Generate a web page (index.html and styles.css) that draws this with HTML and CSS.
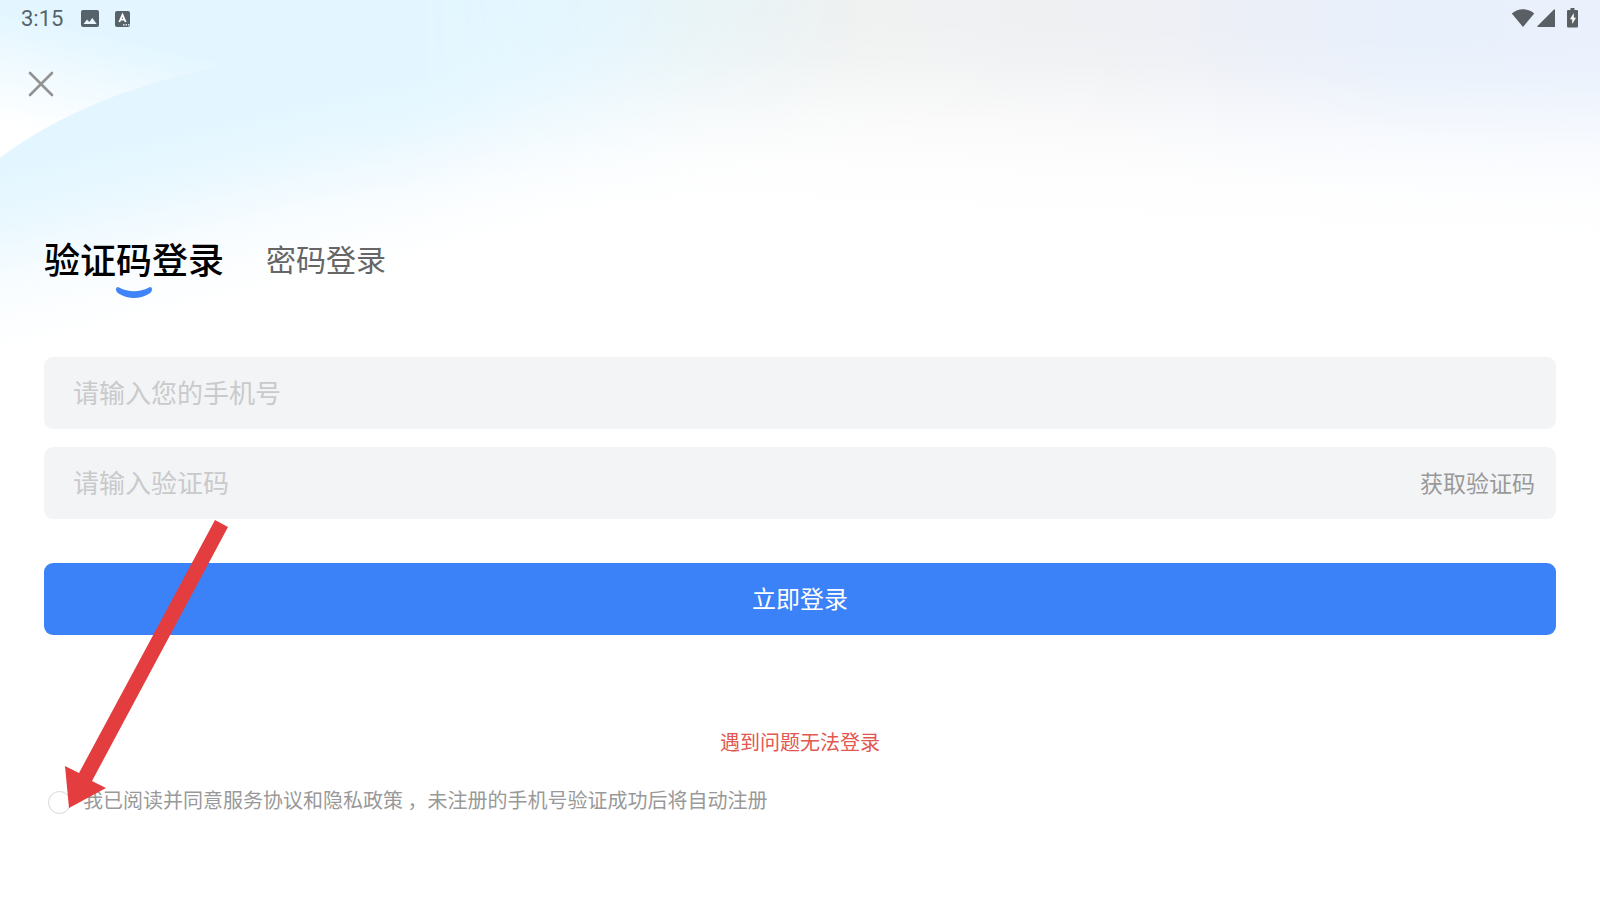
FILE: index.html
```html
<!DOCTYPE html>
<html lang="zh-CN">
<head>
<meta charset="utf-8">
<meta name="viewport" content="width=device-width, initial-scale=1">
<title>登录</title>
<link rel="stylesheet" href="styles.css">
</head>
<body>
<div class="page">
  <svg class="backdrop" viewBox="0 0 1600 360" preserveAspectRatio="none" aria-hidden="true">
    <defs>
      <linearGradient id="hue" x1="0" y1="0" x2="1" y2="0">
        <stop offset="0" stop-color="#e3f6ff"/>
        <stop offset=".3" stop-color="#e4f6fe"/>
        <stop offset=".37" stop-color="#e8f5fa"/>
        <stop offset=".43" stop-color="#ecf3f3"/>
        <stop offset=".55" stop-color="#f0f1f1"/>
        <stop offset=".7" stop-color="#eff0f3"/>
        <stop offset=".8" stop-color="#ebeff8"/>
        <stop offset=".88" stop-color="#e8f0fb"/>
        <stop offset="1" stop-color="#eaf1fd"/>
      </linearGradient>
      <linearGradient id="fade" gradientUnits="userSpaceOnUse" x1="1000" y1="20" x2="992" y2="225">
        <stop offset="0" stop-color="#fff" stop-opacity="0"/>
        <stop offset=".2" stop-color="#fff" stop-opacity=".15"/>
        <stop offset=".5" stop-color="#fff" stop-opacity=".65"/>
        <stop offset=".75" stop-color="#fff" stop-opacity=".92"/>
        <stop offset="1" stop-color="#fff"/>
      </linearGradient>
      <linearGradient id="sky" gradientUnits="userSpaceOnUse" x1="0" y1="170" x2="40" y2="346">
        <stop offset="0" stop-color="#e3f6ff"/>
        <stop offset=".3" stop-color="#e3f6ff" stop-opacity=".75"/>
        <stop offset=".65" stop-color="#e6f5ff" stop-opacity=".25"/>
        <stop offset="1" stop-color="#e6f5ff" stop-opacity="0"/>
      </linearGradient>
      <linearGradient id="side" gradientUnits="userSpaceOnUse" x1="420" y1="0" x2="860" y2="0">
        <stop offset="0" stop-color="#fff"/>
        <stop offset=".5" stop-color="#777"/>
        <stop offset="1" stop-color="#000"/>
      </linearGradient>
      <mask id="side-mask" maskUnits="userSpaceOnUse" x="0" y="0" width="1600" height="360"><rect width="1600" height="360" fill="url(#side)"/></mask>
      <linearGradient id="corner" gradientUnits="userSpaceOnUse" x1="60" y1="24" x2="36" y2="130">
        <stop offset="0" stop-color="#fff" stop-opacity="0"/>
        <stop offset="1" stop-color="#fff"/>
      </linearGradient>
    </defs>
    <rect width="1600" height="360" fill="url(#hue)"/>
    <rect width="1600" height="360" fill="url(#fade)"/>
    <rect width="1600" height="360" fill="url(#sky)" mask="url(#side-mask)"/>
    <path d="M0 0H420Q330 45 230 64C140 82 60 112 0 158Z" fill="url(#corner)"/>
  </svg>

  <header class="status">
    <span class="time">3:15</span>
    <svg class="notice" width="18" height="18" viewBox="0 0 18 18" aria-hidden="true">
      <rect x="0" y="0" width="18" height="17" rx="2" fill="#57636a"/>
      <path d="M2.500 14 6 9.500l2.300 2.600 3-4.100 4.400 6z" fill="#eaf7fd"/>
    </svg>
    <svg class="notice" width="16" height="18" viewBox="0 0 16 18" aria-hidden="true">
      <rect x="0" y="1" width="15" height="16" rx="2" fill="#57636a"/>
      <path d="M4.300 12 7.500 4.800 10.700 12M5.500 9.700h4" fill="none" stroke="#fff" stroke-width="1.800"/>
      <path d="M8 14.800h1.500m1 0H12m1 0h1.500" stroke="#fff" stroke-width="1.300"/>
    </svg>
    <div class="signals">
      <svg width="24" height="20" viewBox="0 0 24 20" aria-hidden="true"><path d="M.8 5.500C7-.2 17-.2 23.200 5.500L12 19z" fill="#5a5f63"/></svg>
      <svg width="18" height="20" viewBox="0 0 18 20" aria-hidden="true"><path d="M17 1.500q1-.9 1 .5v17H1q-1.300 0-.5-1z" fill="#5a5f63"/></svg>
      <svg class="battery" width="12" height="20" viewBox="0 0 12 20" aria-hidden="true">
        <path d="M3.500 0h4v2H10q1 0 1 1v15q0 1.500-1 1.500H1q-1 0-1-1.500V3q0-1 1-1h2.500z" fill="#5a5f63"/>
        <path d="M6.800 5 3 11.300h2.200V16L9 9.700H6.800z" fill="#fff"/>
      </svg>
    </div>
  </header>

  <button class="close" type="button" aria-label="关闭">
    <svg width="26" height="26" viewBox="0 0 26 26" aria-hidden="true"><path d="M2 2l22 22M24 2 2 24" stroke="#929292" stroke-width="2.600" stroke-linecap="round"/></svg>
  </button>

  <main class="login">
    <nav class="tabs">
      <button class="tab tab-active" type="button">验证码登录
        <svg class="smile" width="36" height="11" viewBox="0 0 36 11" aria-hidden="true"><path d="M0 2Q.5-.6 3 .4Q18 8 33 .4Q35.500-.6 36 2Q36.200 5 33.500 6.400Q18 15.400 2.500 6.400Q-.2 5 0 2z" fill="#3f84f8"/></svg>
      </button>
      <button class="tab" type="button">密码登录</button>
    </nav>

    <form class="form">
      <div class="field"><input class="entry" type="tel" aria-label="手机号" placeholder="请输入您的手机号"></div>
      <div class="field">
        <input class="entry" type="text" aria-label="验证码" placeholder="请输入验证码">
        <button class="get-code" type="button">获取验证码</button>
      </div>
      <button class="submit" type="button">立即登录</button>
      <a class="help" href="#">遇到问题无法登录</a>
      <div class="consent">
        <input class="agree" type="radio" id="agree">
        <label for="agree">我已阅读并同意服务协议和隐私政策 ，未注册的手机号验证成功后将自动注册</label>
      </div>
      <svg class="arrow" width="164" height="289" viewBox="0 0 164 289" aria-hidden="true"><path d="M150 0 163 7 27 261 41 268 4 288 0 246 14 253z" fill="#e43d3f"/></svg>
    </form>
  </main>
</div>
</body>
</html>
```
FILE: styles.css
```css
* { box-sizing: border-box; }

body {
  margin: 0;
  background: #fff;
  font-family: "Noto Sans CJK SC", sans-serif;
}

button {
  padding: 0;
  border: 0;
  background: none;
  font: inherit;
  color: inherit;
  cursor: pointer;
}

svg { display: block; flex: none; }

.page {
  position: relative;
  min-height: 100vh;
}

.backdrop {
  position: absolute;
  top: 0;
  left: 0;
  z-index: -1;
  width: 100%;
  height: 360px;
}

.status {
  display: flex;
  align-items: center;
  height: 38px;
  padding: 0 21px;
}

.time {
  margin-right: 18px;
  font: 22px/28px Roboto, sans-serif;
  color: #57636a;
}

.notice { margin-right: 16px; }

.signals {
  display: flex;
  align-items: center;
  gap: 2px;
  height: 34px;
  margin-left: auto;
  padding-bottom: 2px;
}

.battery { margin-left: 10px; }

.close {
  display: block;
  margin: 33px 28px 0;
}

.login { padding: 0 44px; }

.tabs {
  display: flex;
  align-items: center;
  gap: 42px;
  margin-top: 133px;
}

.tab {
  position: relative;
  font-size: 30px;
  line-height: 56px;
  color: #666;
}

.tab-active {
  font-size: 36px;
  font-weight: 500;
  color: #000;
}

.smile {
  position: absolute;
  bottom: -12px;
  left: 50%;
  margin-left: -18px;
}

.form {
  position: relative;
  display: flex;
  flex-direction: column;
  margin-top: 71px;
}

.field {
  display: flex;
  align-items: center;
  height: 72px;
  margin-bottom: 18px;
  padding: 0 21px 2px 29px;
  border-radius: 9px;
  background: #f3f4f6;
}

.entry {
  flex: 1;
  min-width: 0;
  height: 100%;
  padding: 0 0 2px;
  border: 0;
  outline: 0;
  background: none;
  font: inherit;
  font-size: 26px;
  color: #333;
}

.entry::placeholder { color: #c9cacb; opacity: 1; }

.get-code {
  font-size: 23px;
  color: #999;
}

.submit {
  height: 72px;
  margin-top: 26px;
  padding-bottom: 4px;
  border-radius: 9px;
  background: #3b82f9;
  font-size: 24px;
  color: #fff;
}

.help {
  align-self: center;
  margin-top: 92px;
  font-size: 20px;
  line-height: 30px;
  color: #e2574f;
  text-decoration: none;
}

.consent {
  display: flex;
  align-items: center;
  gap: 12px;
  margin-top: 28px;
  padding-left: 4px;
  font-size: 20px;
  line-height: 30px;
  color: #999;
}

.agree {
  appearance: none;
  width: 23px;
  height: 23px;
  margin: 4px 0 0;
  border: 1px solid #d8d8d8;
  border-radius: 50%;
  background: #fff;
}

.agree:checked { background: #3b82f9; }

.arrow {
  position: absolute;
  top: 163px;
  left: 21px;
  pointer-events: none;
}
```
